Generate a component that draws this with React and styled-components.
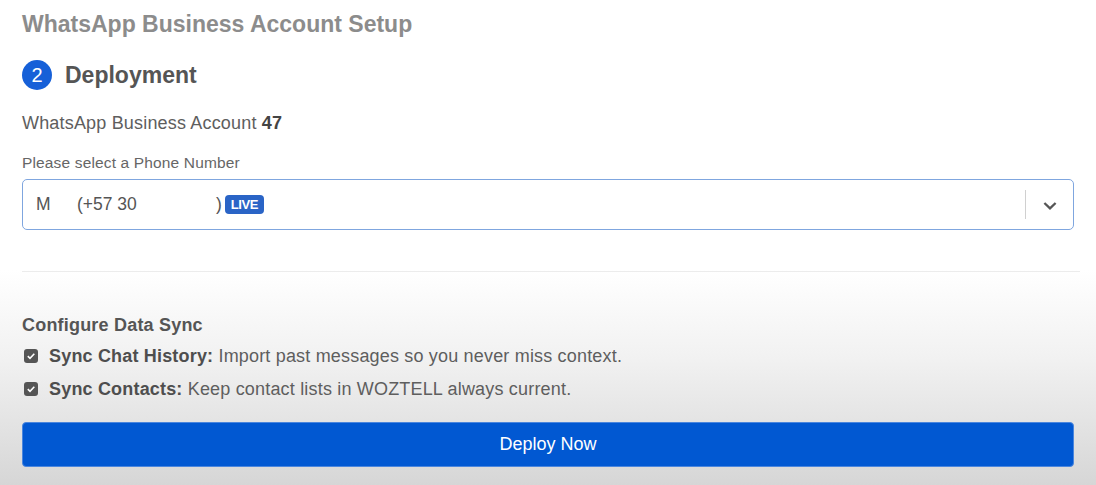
import React from 'react'
import styled, { createGlobalStyle } from 'styled-components'

const GlobalStyle = createGlobalStyle`
    html, body {
        margin: 0;
        padding: 0;
    }
    body {
        font-family: "Liberation Sans", Arial, sans-serif;
        background: linear-gradient(to bottom, #ffffff 0px, #ffffff 270px, #f1f1f1 360px, #e2e2e2 430px, #d6d6d6 485px);
        min-height: 485px;
        color: #555;
    }
    * {
        box-sizing: border-box;
    }
`;

function App() {
    const [sync, setSync] = React.useState({ history: true, contacts: true })

    const toggle = (key) => {
        setSync({ ...sync, [key]: !sync[key] })
    }

    return (
        <>
            <GlobalStyle />
            <PageStyled>
                <Title>WhatsApp Business Account Setup</Title>
                <StepHeader>
                    <StepNumber>2</StepNumber>
                    <StepTitle>Deployment</StepTitle>
                </StepHeader>
                <AccountLine>
                    WhatsApp Business Account <b>47</b>
                </AccountLine>
                <FieldLabel>Please select a Phone Number</FieldLabel>
                <Select>
                    <SelectValue>
                        <span className="name">M</span>
                        <span className="phone">(+57 30</span>
                        <span className="close">)</span>
                        <LiveBadge>LIVE</LiveBadge>
                    </SelectValue>
                    <SelectIndicator>
                        <svg width="16" height="16" viewBox="0 0 20 20" fill="#555">
                            <path d="M4 6.5 10 12.3l6-5.8 2 2L10 16.2 2 8.5z" />
                        </svg>
                    </SelectIndicator>
                </Select>
                <Divider />
                <SectionTitle>Configure Data Sync</SectionTitle>
                <CheckRow onClick={() => toggle('history')}>
                    <CheckBox $checked={sync.history}>
                        {sync.history && (
                            <svg width="10" height="10" viewBox="0 0 10 10">
                                <path d="M1.8 5.2 4 7.3 8.3 2.8" fill="none" stroke="#fff" strokeWidth="1.6" />
                            </svg>
                        )}
                    </CheckBox>
                    <span><b>Sync Chat History:</b> Import past messages so you never miss context.</span>
                </CheckRow>
                <CheckRow onClick={() => toggle('contacts')}>
                    <CheckBox $checked={sync.contacts}>
                        {sync.contacts && (
                            <svg width="10" height="10" viewBox="0 0 10 10">
                                <path d="M1.8 5.2 4 7.3 8.3 2.8" fill="none" stroke="#fff" strokeWidth="1.6" />
                            </svg>
                        )}
                    </CheckBox>
                    <span><b>Sync Contacts:</b> Keep contact lists in WOZTELL always current.</span>
                </CheckRow>
                <DeployButton>Deploy Now</DeployButton>
            </PageStyled>
        </>
    )
}

const PageStyled = styled.div`
    padding: 10px 22px 0 22px;
    display: flex;
    flex-direction: column;
`;

const Title = styled.h1`
    margin: 0;
    font-size: 23px;
    font-weight: 700;
    color: #8c8c8c;
    line-height: 28px;
`;

const StepHeader = styled.div`
    display: flex;
    align-items: center;
    gap: 13px;
    margin-top: 22px;
`;

const StepNumber = styled.div`
    width: 30px;
    height: 30px;
    border-radius: 50%;
    background-color: #1660d8;
    color: #fff;
    font-size: 20px;
    display: flex;
    align-items: center;
    justify-content: center;
`;

const StepTitle = styled.h2`
    margin: 0;
    font-size: 23px;
    font-weight: 700;
    color: #555;
    line-height: 30px;
`;

const AccountLine = styled.div`
    margin-top: 23px;
    font-size: 18px;
    line-height: 20px;
    letter-spacing: 0.18px;
    color: #5e5e5e;

    b {
        color: #444;
    }
`;

const FieldLabel = styled.div`
    margin-top: 22px;
    font-size: 15.5px;
    line-height: 16px;
    letter-spacing: 0.15px;
    color: #666;
`;

const Select = styled.div`
    margin-top: 8px;
    height: 51px;
    border: 1.5px solid #7fa6df;
    border-radius: 5px;
    display: flex;
    align-items: center;
    background: #fff;
`;

const SelectValue = styled.div`
    flex: 1;
    display: flex;
    align-items: center;
    padding-left: 13px;
    font-size: 17.5px;
    color: #555;

    .name {
        width: 41px;
    }
    .phone {
        width: 139px;
    }
    .close {
        margin-right: 3px;
    }
`;

const LiveBadge = styled.span`
    background-color: #2a64c6;
    color: #fff;
    font-size: 13px;
    font-weight: 700;
    line-height: 13px;
    padding: 3px 6px;
    border-radius: 4px;
    letter-spacing: -0.4px;
`;

const SelectIndicator = styled.div`
    height: 29px;
    width: 48px;
    border-left: 1px solid #d0d0d0;
    display: flex;
    align-items: center;
    justify-content: center;
`;

const Divider = styled.hr`
    margin: 41px -6px 0 0;
    border: none;
    border-top: 1px solid #ececec;
`;

const SectionTitle = styled.h3`
    margin: 43px 0 0 0;
    font-size: 18px;
    line-height: 20px;
    letter-spacing: 0.2px;
    font-weight: 700;
    color: #555;
`;

const CheckRow = styled.label`
    display: flex;
    align-items: center;
    gap: 11px;
    margin-top: 11px;
    font-size: 18px;
    line-height: 20px;
    letter-spacing: 0.18px;
    color: #5e5e5e;
    cursor: pointer;

    & + & {
        margin-top: 13px;
    }

    b {
        color: #4e4e4e;
    }
`;

const CheckBox = styled.span`
    width: 14px;
    height: 14px;
    margin-left: 2px;
    border-radius: 3px;
    flex-shrink: 0;
    background-color: ${props => props.$checked ? '#555' : '#fff'};
    border: ${props => props.$checked ? 'none' : '1px solid #888'};
    display: flex;
    align-items: center;
    justify-content: center;
`;

const DeployButton = styled.button`
    margin-top: 23px;
    height: 45px;
    border: 1px solid #4a86de;
    border-radius: 4px;
    background-color: #0158d2;
    color: #fff;
    font-family: "Liberation Sans", Arial, sans-serif;
    font-size: 18px;
    cursor: pointer;
`;

export default App
